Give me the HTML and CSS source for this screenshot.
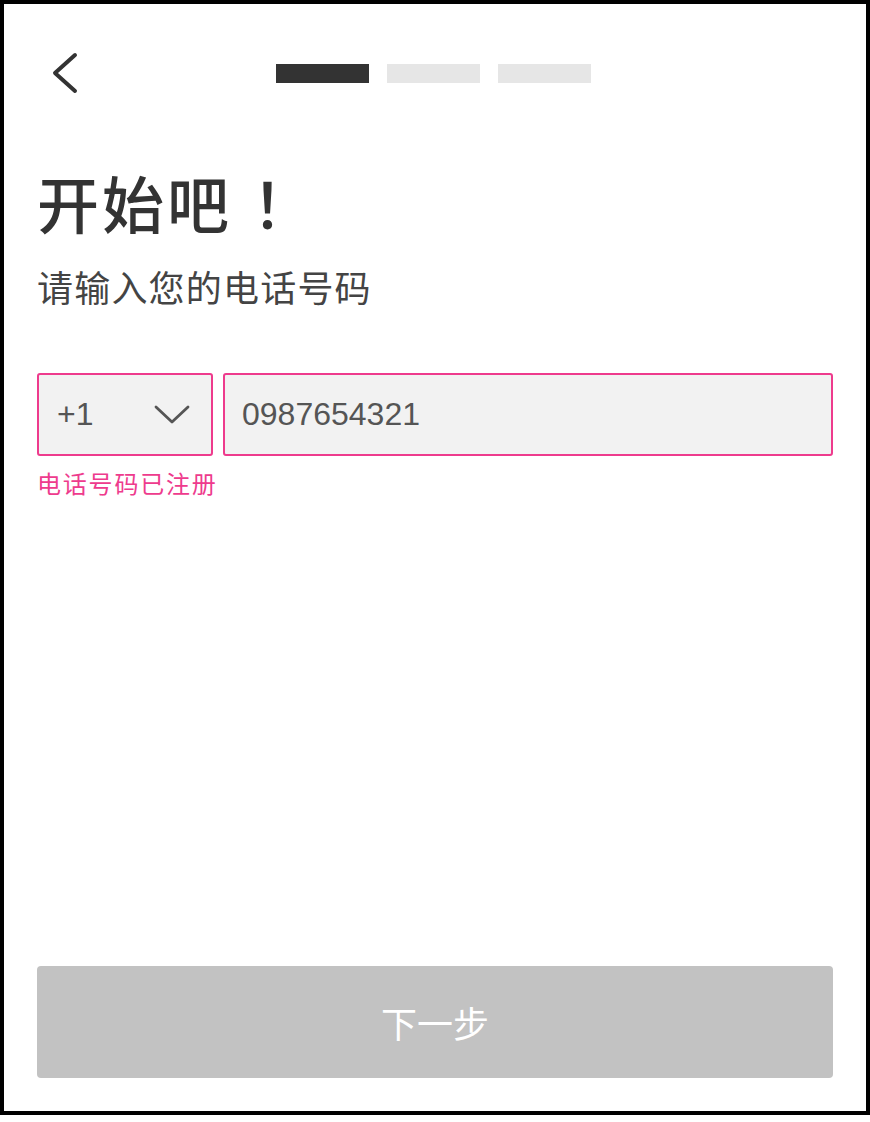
FILE: index.html
```html
<!DOCTYPE html>
<html lang="zh-CN">
<head>
    <meta charset="UTF-8">
    <meta name="viewport" content="width=device-width, initial-scale=1.0">
    <title>注册</title>
    <link rel="stylesheet" href="styles.css">
</head>
<body>
    <div class="screen">
        <!-- Barra superior: voltar + progresso -->
        <div class="top-bar">
            <button class="back-button" type="button">
                <svg width="28" height="42" viewBox="0 0 28 42">
                    <polyline points="24,3 4,21 24,39" fill="none" stroke="#333" stroke-width="4" stroke-linecap="round" stroke-linejoin="round"/>
                </svg>
            </button>
            <div class="steps">
                <span class="step active"></span>
                <span class="step"></span>
                <span class="step"></span>
            </div>
            <div></div>
        </div>

        <div class="content">
            <h1 class="title">开始吧<span class="bang">！</span></h1>
            <p class="subtitle">请输入您的电话号码</p>

            <div class="phone-row">
                <div class="country-select">
                    <span>+1</span>
                    <svg width="36" height="20" viewBox="0 0 36 20">
                        <polyline points="2,2 18,17 34,2" fill="none" stroke="#555" stroke-width="2.8" stroke-linecap="round" stroke-linejoin="round"/>
                    </svg>
                </div>
                <div class="phone-input">0987654321</div>
            </div>
            <div class="error-text">电话号码已注册</div>

            <button class="next-button" type="button">下一步</button>
        </div>
    </div>
</body>
</html>
```

FILE: styles.css
```css
body {
    margin: 0;
    padding: 0;
    background-color: #fff;
    font-family: "Liberation Sans", "Noto Sans CJK SC", sans-serif;
}

/* Moldura preta em volta da tela */
.screen {
    box-sizing: border-box;
    height: 1115px;
    border: 4px solid #000;
    display: flex;
    flex-direction: column;
}

.top-bar {
    height: 138px;
    display: grid;
    grid-template-columns: 1fr auto 1fr;
    align-items: center;
}

.back-button {
    justify-self: start;
    margin-left: 47px;
    padding: 0;
    border: none;
    background: none;
    display: flex;
}

.steps {
    display: flex;
    gap: 18px;
    margin-left: -3px;
}

.step {
    width: 93px;
    height: 19px;
    background-color: #e6e6e6;
}

.step.active {
    background-color: #333;
}

.content {
    flex: 1;
    display: flex;
    flex-direction: column;
    padding: 0 33px 33px;
}

.title {
    margin: 30px 0 0;
    font-size: 62px;
    line-height: 72px;
    font-weight: 500;
    letter-spacing: 3px;
    color: #333;
}

.title .bang {
    margin-left: 20px;
}

.subtitle {
    margin: 24px 0 0;
    font-size: 36px;
    line-height: 44px;
    letter-spacing: 1.2px;
    color: #444;
}

.phone-row {
    display: flex;
    gap: 10px;
    margin-top: 61px;
}

.country-select,
.phone-input {
    box-sizing: border-box;
    height: 83px;
    border: 2px solid #ee3b8d;
    border-radius: 3px;
    background-color: #f2f2f2;
    font-size: 32px;
    color: #555;
    display: flex;
    align-items: center;
}

.country-select {
    width: 176px;
    padding: 0 21px 0 18px;
    justify-content: space-between;
}

.phone-input {
    flex: 1;
    padding-left: 17px;
}

.error-text {
    margin-top: 13px;
    font-size: 24px;
    line-height: 32px;
    letter-spacing: 1.8px;
    color: #ee3b8d;
}

.next-button {
    margin-top: auto;
    height: 112px;
    border: none;
    border-radius: 4px;
    background-color: #c2c2c2;
    color: #fff;
    font-family: "Liberation Sans", "Noto Sans CJK SC", sans-serif;
    font-size: 36px;
}
```
